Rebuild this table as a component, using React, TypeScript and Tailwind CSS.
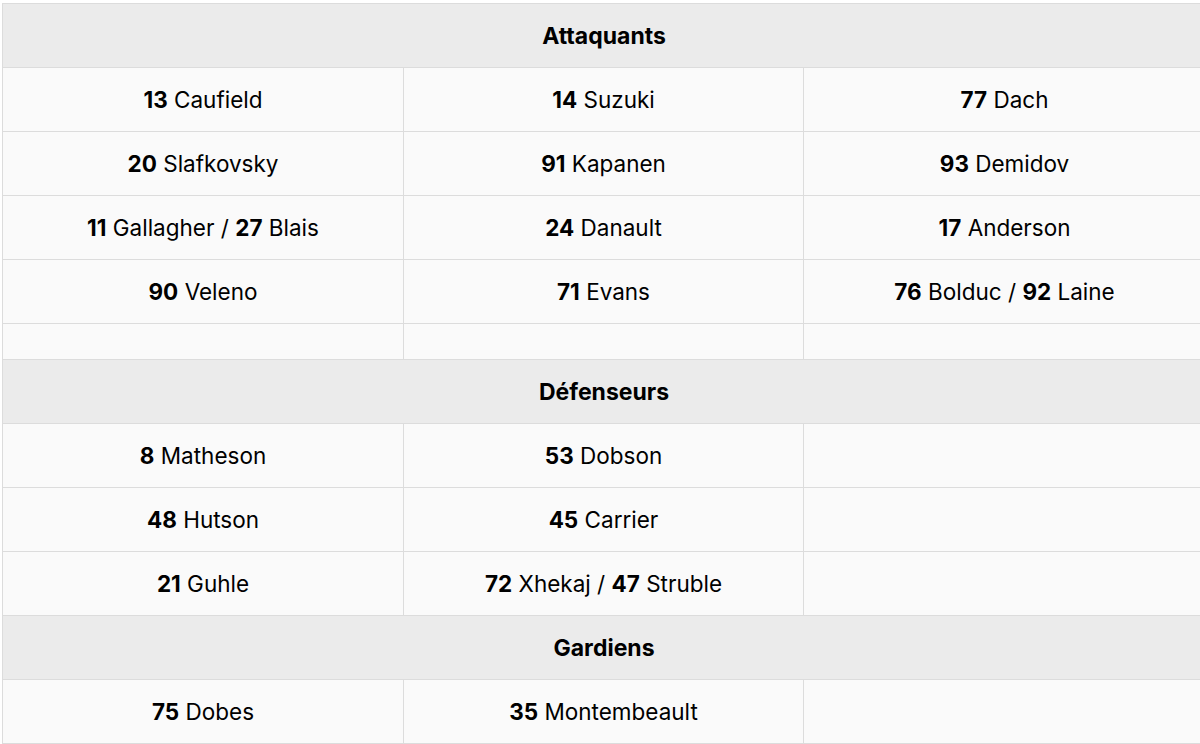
import React from "react";

type P = [string, string];
type Cell = P[];

const Name = ({ c }: { c: Cell }) => (
  <>
    {c.map((p, i) => (
      <React.Fragment key={i}>
        {i > 0 && " / "}
        <b className="font-bold">{p[0]}</b> {p[1]}
      </React.Fragment>
    ))}
  </>
);

const Header = ({ t }: { t: string }) => (
  <tr className="bg-[#ebebeb]">
    <td colSpan={3} className="h-[64px] border border-[#dcdcdc] text-center font-bold text-[23px]">
      {t}
    </td>
  </tr>
);

const Row = ({ cells }: { cells: Cell[] }) => (
  <tr className="bg-[#fafafa]">
    {cells.map((c, i) => (
      <td key={i} className="h-[64px] border border-[#dcdcdc] text-center">
        <Name c={c} />
      </td>
    ))}
  </tr>
);

const fw: Cell[][] = [
  [[["13", "Caufield"]], [["14", "Suzuki"]], [["77", "Dach"]]],
  [[["20", "Slafkovsky"]], [["91", "Kapanen"]], [["93", "Demidov"]]],
  [[["11", "Gallagher"], ["27", "Blais"]], [["24", "Danault"]], [["17", "Anderson"]]],
  [[["90", "Veleno"]], [["71", "Evans"]], [["76", "Bolduc"], ["92", "Laine"]]],
];
const df: Cell[][] = [
  [[["8", "Matheson"]], [["53", "Dobson"]], []],
  [[["48", "Hutson"]], [["45", "Carrier"]], []],
  [[["21", "Guhle"]], [["72", "Xhekaj"], ["47", "Struble"]], []],
];
const gk: Cell[][] = [[[["75", "Dobes"]], [["35", "Montembeault"]], []]];

export default function App() {
  return (
    <div className="w-[1200px] h-[744px] overflow-hidden bg-white pl-[2px] pt-[3px]">
      <table
        className="border-collapse w-[1203px] table-fixed text-[22.5px] text-black leading-[26px]"
        style={{ fontFamily: "Inter, 'Helvetica Neue', Arial, sans-serif" }}
      >
        <colgroup>
          <col className="w-[401px]" />
          <col className="w-[400px]" />
          <col className="w-[402px]" />
        </colgroup>
        <tbody>
          <Header t="Attaquants" />
          {fw.map((r, i) => (
            <Row key={i} cells={r} />
          ))}
          <tr className="bg-[#fafafa]">
            <td className="h-[36px] border border-[#dcdcdc]"></td>
            <td className="h-[36px] border border-[#dcdcdc]"></td>
            <td className="h-[36px] border border-[#dcdcdc]"></td>
          </tr>
          <Header t="Défenseurs" />
          {df.map((r, i) => (
            <Row key={i} cells={r} />
          ))}
          <Header t="Gardiens" />
          {gk.map((r, i) => (
            <Row key={i} cells={r} />
          ))}
        </tbody>
      </table>
    </div>
  );
}
